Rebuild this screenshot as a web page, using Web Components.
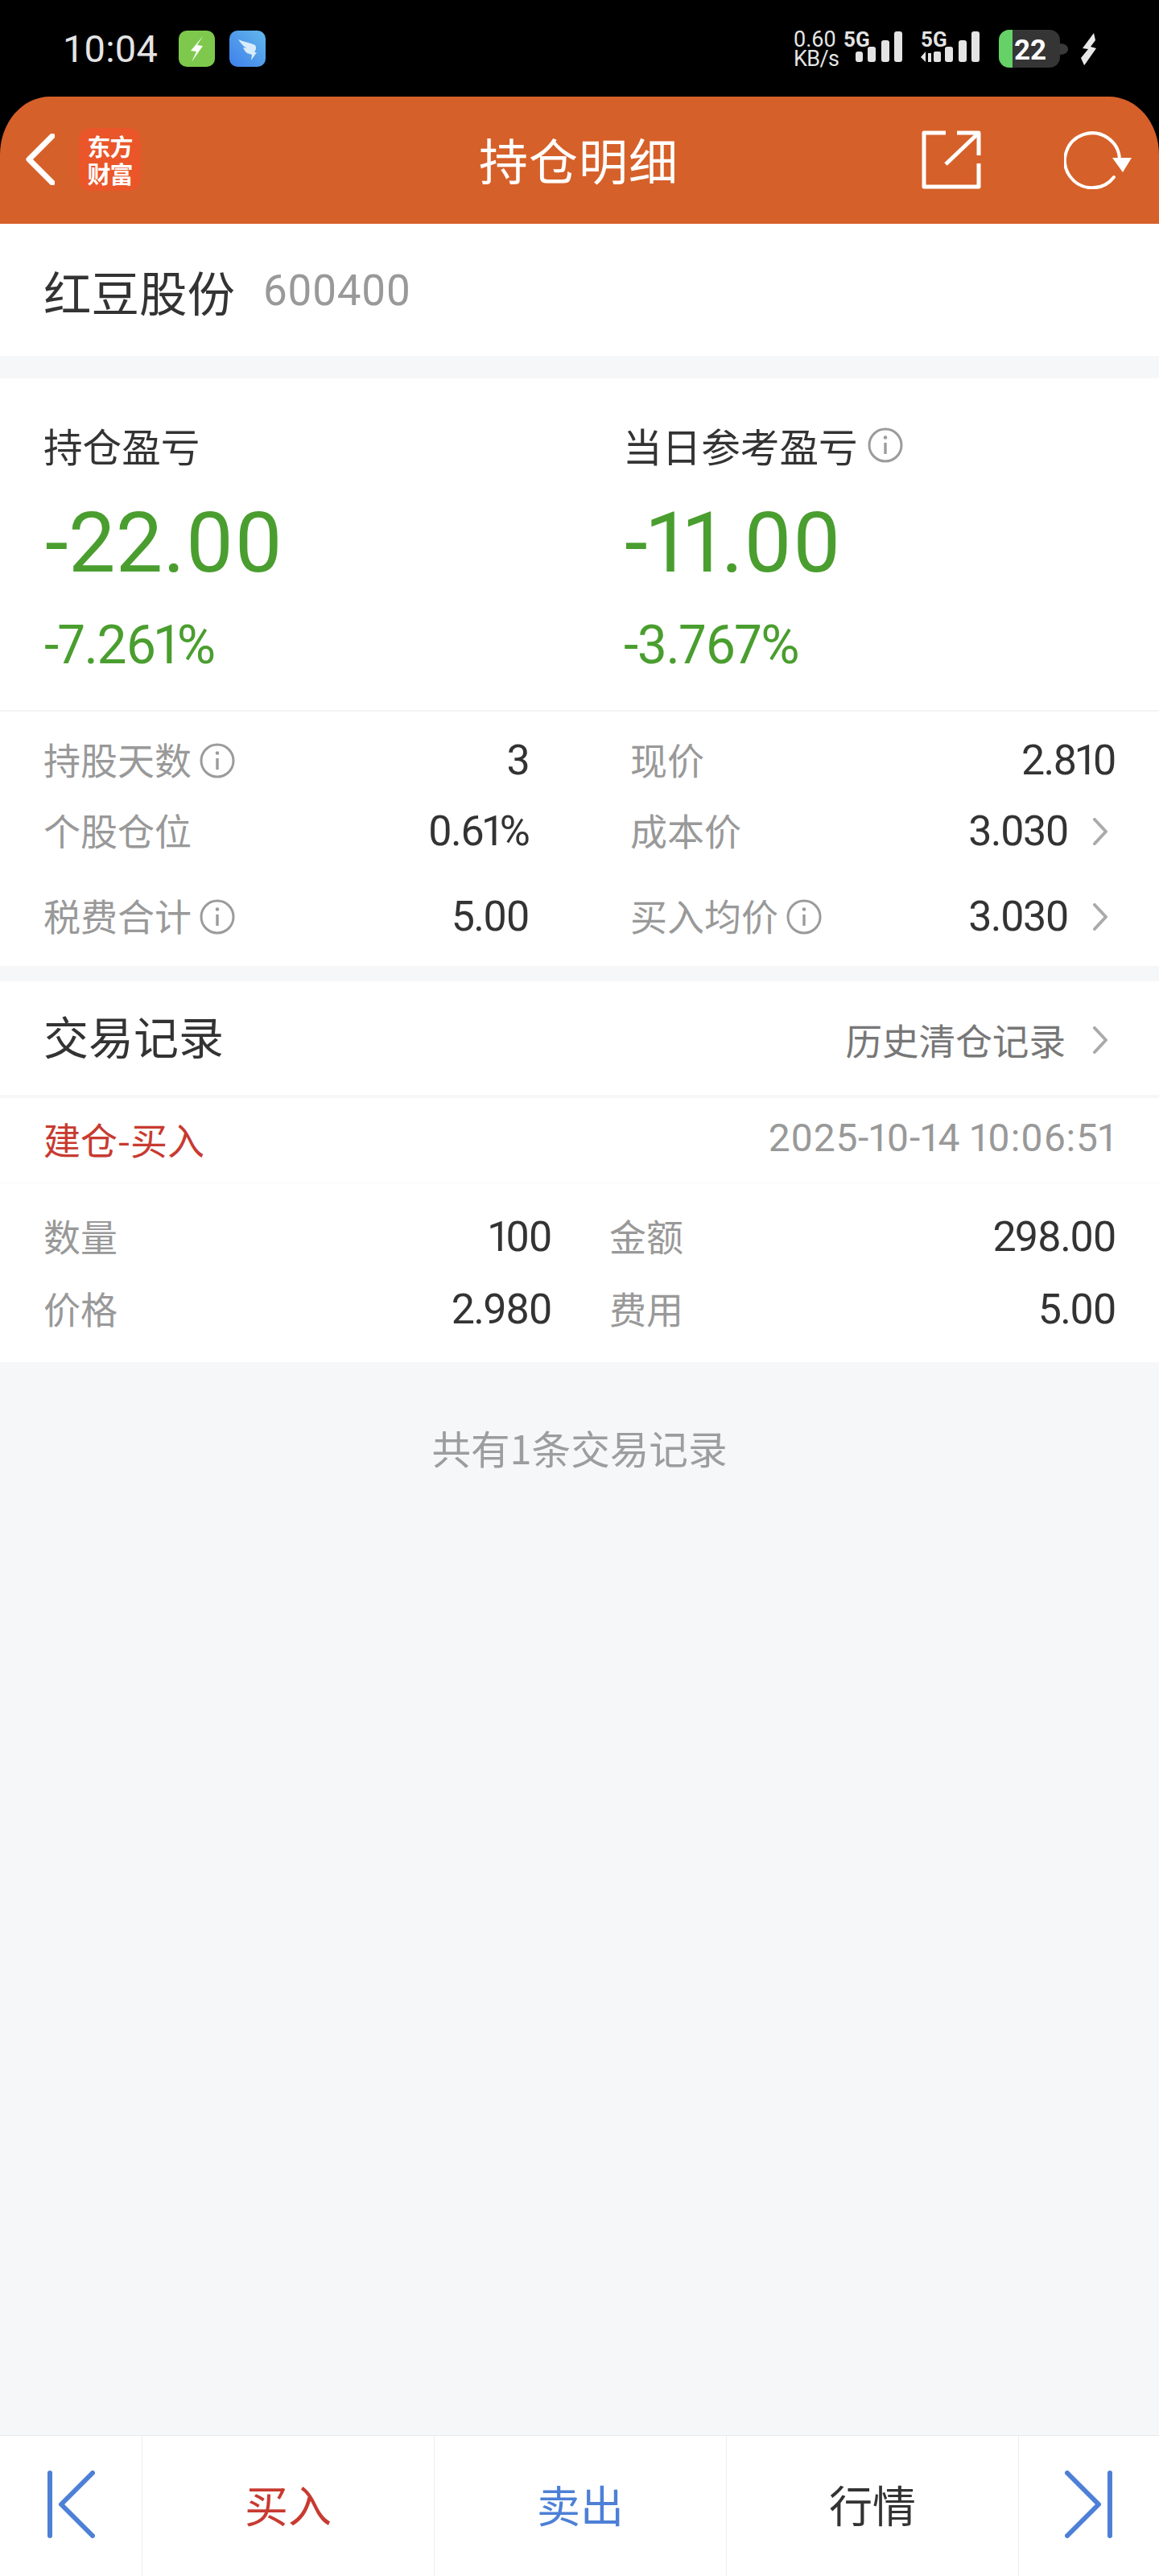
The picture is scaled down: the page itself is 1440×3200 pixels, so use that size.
<!DOCTYPE html>
<html lang="zh">
<head>
<meta charset="utf-8">
<title>持仓明细</title>
<style>
  html, body { margin: 0; padding: 0; }
  body {
    width: 1440px;
    height: 3200px;
    display: flex;
    flex-direction: column;
    overflow: hidden;
    background: #f6f7f9;
    color: #333;
    font-family: Roboto, "Noto Sans CJK SC", sans-serif;
  }
</style>
</head>
<body>
<status-bar></status-bar>
<app-header title="持仓明细"></app-header>
<stock-title name="红豆股份" code="600400"></stock-title>
<pnl-summary></pnl-summary>
<stat-grid>
  <stat-item label="持股天数" value="3" info></stat-item>
  <stat-item label="现价" value="2.810"></stat-item>
  <stat-item label="个股仓位" value="0.61%"></stat-item>
  <stat-item label="成本价" value="3.030" more></stat-item>
  <stat-item label="税费合计" value="5.00" info></stat-item>
  <stat-item label="买入均价" value="3.030" info more></stat-item>
</stat-grid>
<trade-section></trade-section>
<bottom-bar></bottom-bar>

<script>
const INFO_SVG = `<svg viewBox="0 0 44 44" width="44" height="44" fill="none" stroke="#9b9b9b">
  <circle cx="22" cy="22" r="20" stroke-width="3"/>
  <path d="M22 19v14" stroke-width="3.4"/>
  <circle cx="22" cy="12.5" r="2.3" fill="#9b9b9b" stroke="none"/>
</svg>`;

const CHEVRON_SVG = `<svg viewBox="0 0 20 34" width="20" height="34" fill="none" stroke="#aaa" stroke-width="4" stroke-linecap="round" stroke-linejoin="round">
  <path d="M3 2l14 15L3 32"/>
</svg>`;

class StatusBar extends HTMLElement {
  constructor() {
    super();
    this.attachShadow({ mode: 'open' });
  }

  connectedCallback() {
    this.shadowRoot.innerHTML = `
      <style>
        :host {
          display: flex;
          align-items: center;
          box-sizing: border-box;
          height: 120px;
          flex: none;
          padding: 4px 76px 3px 78px;
          background: #000;
          color: #e4e4e4;
          font-family: Roboto, sans-serif;
        }
        .time { font-size: 47px; line-height: 56px; margin-right: 26px; letter-spacing: .2px; }
        .app { display: block; width: 45px; height: 45px; margin-right: 18px; }
        .space { flex: 1; }
        .speed { width: 62px; font-size: 27px; line-height: 24px; }
        .speed div:last-child { letter-spacing: -.6px; }
        .signal { position: relative; width: 74px; height: 46px; }
        .signal svg { display: block; }
        .g5 { position: absolute; top: -4px; left: 0; font: 700 26px/30px Roboto, sans-serif; }
        .batt { display: block; margin-left: 24px; }
        .bolt { display: block; margin-left: 15px; }
      </style>
      <span class="time">10:04</span>
      <svg class="app" viewBox="0 0 45 45">
        <rect width="45" height="45" rx="10" fill="#7ec94d"/>
        <path d="M30 7L15 25l7 1-6 13 14-20-7-1z" fill="#fff"/>
      </svg>
      <svg class="app" viewBox="0 0 45 45">
        <defs><linearGradient id="dt" x1="0" y1="1" x2="1" y2="0">
          <stop offset="0" stop-color="#3f7fec"/><stop offset="1" stop-color="#62b8ea"/>
        </linearGradient></defs>
        <rect width="45" height="45" rx="10" fill="url(#dt)"/>
        <path d="M11 11c7 3 14 4 21 7 2 3 1 6-1 9l3 0-7 10 1-7-6-2c-3-2-4-5-5-7l5 1c-4-2-7-5-11-11z" fill="#d9ecfb"/>
      </svg>
      <span class="space"></span>
      <div class="speed"><div>0.60</div><div>KB/s</div></div>
      <div class="signal">
        <svg viewBox="0 0 74 46" width="74" height="46" fill="#e4e4e4">
          <rect x="15" y="26" width="9" height="13" rx="3"/>
          <rect x="30" y="20" width="10" height="19" rx="3"/>
          <rect x="47" y="12" width="10" height="27" rx="3"/>
          <rect x="63" y="1" width="10" height="38" rx="3"/>
        </svg>
        <span class="g5">5G</span>
      </div>
      <span style="width:21px"></span>
      <div class="signal">
        <svg viewBox="0 0 74 46" width="74" height="46" fill="#e4e4e4">
          <path d="M7 26v13l-6-6z"/>
          <rect x="10" y="28" width="4" height="11"/>
          <rect x="17" y="26" width="9" height="13" rx="2"/>
          <rect x="31" y="20" width="10" height="19" rx="3"/>
          <rect x="48" y="12" width="10" height="27" rx="3"/>
          <rect x="64" y="1" width="10" height="38" rx="3"/>
        </svg>
        <span class="g5" style="left:1px">5G</span>
      </div>
      <svg class="batt" viewBox="0 0 87 47" width="87" height="47">
        <path d="M76 17c6 0 10 3 10 7s-4 7-10 7z" fill="#3a3a3a"/>
        <rect width="76" height="47" rx="13" fill="#353535"/>
        <path d="M13 0h4v47h-4a13 13 0 0 1-13-13V13A13 13 0 0 1 13 0z" fill="#65d166"/>
        <text x="19" y="37" font-family="Roboto, sans-serif" font-weight="700" font-size="35" fill="#fff">22</text>
      </svg>
      <svg class="bolt" viewBox="0 0 21 40" width="21" height="40">
        <path d="M16 0L2 19l7 1-9 11 4 9 1-1 14-20-7-2 6-8z" fill="#e8e8e8"/>
      </svg>
    `;
  }
}

class AppHeader extends HTMLElement {
  constructor() {
    super();
    this.attachShadow({ mode: 'open' });
  }

  connectedCallback() {
    this.shadowRoot.innerHTML = `
      <style>
        :host {
          display: block;
          flex: none;
          background: #000;
        }
        .bar {
          display: grid;
          grid-template-columns: 1fr auto 1fr;
          align-items: center;
          box-sizing: border-box;
          height: 158px;
          padding: 0 34px 2px 32px;
          background: #d66029;
          color: #fff;
          border-radius: 62px 62px 0 0 / 72px 72px 0 0;
        }
        .left, .right { display: flex; align-items: center; }
        .right { justify-content: flex-end; gap: 103px; }
        .logo {
          box-sizing: border-box;
          width: 77px;
          height: 78px;
          margin-left: 30px;
          padding-top: 5px;
          border-radius: 16px;
          background: #ea5629;
          font: 700 29px/34px "Noto Sans CJK SC", sans-serif;
          text-align: center;
          letter-spacing: -1px;
        }
        .title {
          font: 400 61px/78px "Noto Sans CJK SC", sans-serif;
          letter-spacing: 1px;
        }
        svg { display: block; }
      </style>
      <div class="bar">
        <div class="left">
          <svg width="36" height="64" viewBox="0 0 36 64" fill="none" stroke="#fff" stroke-width="7" stroke-linecap="round" stroke-linejoin="round"><path d="M33 3L4 32l29 29"/></svg>
          <div class="logo">东方<br>财富</div>
        </div>
        <div class="title">${this.getAttribute('title')}</div>
        <div class="right">
          <svg width="74" height="73" viewBox="0 0 74 73" fill="none" stroke="#fff" stroke-width="5" stroke-linejoin="round">
            <path d="M30 3H3v67h68V41"/>
            <path d="M30 42L70 4"/>
            <path d="M44 3h27v28"/>
          </svg>
          <svg width="84" height="73" viewBox="0 0 84 73" fill="none" stroke="#fff" stroke-width="4">
            <path d="M69 36A34 34 0 1 0 62 58" stroke-linecap="round"/>
            <path d="M60 34h24L73 52z" fill="#fff" stroke="none"/>
          </svg>
        </div>
      </div>
    `;
  }
}

class StockTitle extends HTMLElement {
  constructor() {
    super();
    this.attachShadow({ mode: 'open' });
  }

  connectedCallback() {
    this.shadowRoot.innerHTML = `
      <style>
        :host {
          display: flex;
          align-items: center;
          flex: none;
          box-sizing: border-box;
          height: 164px;
          padding: 2px 54px 0;
          margin-bottom: 28px;
          background: #fff;
        }
        .name { font: 400 59.5px/70px "Noto Sans CJK SC", sans-serif; color: #333; }
        .code { margin-left: 35px; font: 400 53px/70px Roboto, sans-serif; color: #999; letter-spacing: .8px; }
      </style>
      <span class="name">${this.getAttribute('name')}</span>
      <span class="code">${this.getAttribute('code')}</span>
    `;
  }
}

class PnlSummary extends HTMLElement {
  constructor() {
    super();
    this.attachShadow({ mode: 'open' });
  }

  connectedCallback() {
    this.shadowRoot.innerHTML = `
      <style>
        :host {
          display: grid;
          grid-template-columns: 720px 1fr;
          flex: none;
          box-sizing: border-box;
          height: 414px;
          padding: 54px 54px 0;
          background: #fff;
          border-bottom: 2px solid #f3f4f6;
        }
        .label {
          display: flex;
          align-items: center;
          gap: 12px;
          height: 58px;
          font: 400 48.6px/58px "Noto Sans CJK SC", sans-serif;
          color: #333;
        }
        .label svg { display: block; }
        .big {
          margin: 33px 0 0 2px;
          height: 120px;
          font: 400 104px/120px Roboto, sans-serif;
          font-variant-numeric: proportional-nums;
          color: #4a9e2f;
          letter-spacing: .3px;
        }
        .pct {
          margin: 29px 0 0 1px;
          height: 76px;
          font: 400 66px/76px Roboto, sans-serif;
          font-variant-numeric: proportional-nums;
          color: #4a9e2f;
          letter-spacing: -1.4px;
        }
      </style>
      <div class="col">
        <div class="label">持仓盈亏</div>
        <div class="big">-22.00</div>
        <div class="pct">-7.261%</div>
      </div>
      <div class="col">
        <div class="label">当日参考盈亏 ${INFO_SVG}</div>
        <div class="big">-11.00</div>
        <div class="pct">-3.767%</div>
      </div>
    `;
  }
}

class StatGrid extends HTMLElement {
  constructor() {
    super();
    this.attachShadow({ mode: 'open' });
  }

  connectedCallback() {
    this.shadowRoot.innerHTML = `
      <style>
        :host {
          display: grid;
          grid-template-columns: 603px 603px;
          grid-template-rows: 88px 106px 88px;
          column-gap: 126px;
          align-items: start;
          flex: none;
          box-sizing: border-box;
          height: 316px;
          padding: 17px 54px 0;
          margin-bottom: 19px;
          background: #fff;
        }
      </style>
      <slot></slot>
    `;
  }
}

class StatItem extends HTMLElement {
  constructor() {
    super();
    this.attachShadow({ mode: 'open' });
  }

  connectedCallback() {
    const hasMore = this.hasAttribute('more');
    this.shadowRoot.innerHTML = `
      <style>
        :host {
          display: flex;
          align-items: center;
          height: 88px;
        }
        .label {
          display: flex;
          align-items: center;
          gap: 10px;
          padding-bottom: 6px;
          font: 400 46px/60px "Noto Sans CJK SC", sans-serif;
          color: #999;
        }
        .label svg { margin-top: 6px; }
        .value {
          margin-left: auto;
          font: 400 52px/60px Roboto, sans-serif;
          font-variant-numeric: proportional-nums;
          color: #333;
          letter-spacing: -1.8px;
        }
        .more { display: block; margin: 0 9px 0 30px; }
        svg { display: block; }
      </style>
      <span class="label">${this.getAttribute('label')}${this.hasAttribute('info') ? INFO_SVG : ''}</span>
      <span class="value">${this.getAttribute('value')}</span>
      ${hasMore ? `<span class="more">${CHEVRON_SVG}</span>` : ''}
    `;
  }
}

class TradeRecord extends HTMLElement {
  constructor() {
    super();
    this.attachShadow({ mode: 'open' });
  }

  connectedCallback() {
    this.shadowRoot.innerHTML = `
      <style>
        :host {
          display: block;
          box-sizing: border-box;
          height: 328px;
          background: #fff;
        }
        .top {
          display: flex;
          justify-content: space-between;
          align-items: center;
          box-sizing: border-box;
          height: 106px;
          padding: 0 54px 5px;
          border-bottom: 1px solid #f7f7f8;
        }
        .type { font: 400 46px/68px "Noto Sans CJK SC", sans-serif; color: #c83a30; }
        .time {
          font: 400 48px/68px Roboto, sans-serif;
          font-variant-numeric: proportional-nums;
          color: #999;
          letter-spacing: .65px;
        }
        .grid {
          display: grid;
          grid-template-columns: 631px 1fr;
          column-gap: 72px;
          margin-top: 22px;
          padding: 0 54px;
        }
        .cell { display: flex; justify-content: space-between; align-items: center; height: 90px; }
        .k { padding-bottom: 6px; font: 400 46px/60px "Noto Sans CJK SC", sans-serif; color: #999; }
        .v {
          font: 400 52px/60px Roboto, sans-serif;
          font-variant-numeric: proportional-nums;
          color: #333;
          letter-spacing: -1.8px;
        }
      </style>
      <div class="top">
        <span class="type">建仓-买入</span>
        <span class="time">2025-10-14 10:06:51</span>
      </div>
      <div class="grid">
        <div class="cell"><span class="k">数量</span><span class="v">100</span></div>
        <div class="cell"><span class="k">金额</span><span class="v">298.00</span></div>
        <div class="cell"><span class="k">价格</span><span class="v">2.980</span></div>
        <div class="cell"><span class="k">费用</span><span class="v">5.00</span></div>
      </div>
    `;
  }
}

class TradeSection extends HTMLElement {
  constructor() {
    super();
    this.attachShadow({ mode: 'open' });
  }

  connectedCallback() {
    this.shadowRoot.innerHTML = `
      <style>
        :host { display: block; flex: none; }
        .head {
          display: flex;
          align-items: center;
          box-sizing: border-box;
          height: 145px;
          padding: 0 63px 0 54px;
          background: #fff;
          border-bottom: 4px solid #f6f7f9;
        }
        .title { font: 400 56px/70px "Noto Sans CJK SC", sans-serif; color: #333; margin-bottom: 8px; }
        .link {
          margin-left: auto;
          display: flex;
          align-items: center;
          gap: 33px;
          font: 400 45.6px/60px "Noto Sans CJK SC", sans-serif;
          color: #777;
          margin-top: 2px;
        }
        .link svg { display: block; margin-top: 2px; }
        .count {
          margin-top: 76px;
          text-align: center;
          font: 400 48.6px/60px "Noto Sans CJK SC", sans-serif;
          color: #9d9d9d;
        }
      </style>
      <div class="head">
        <span class="title">交易记录</span>
        <span class="link">历史清仓记录 ${CHEVRON_SVG}</span>
      </div>
      <trade-record></trade-record>
      <div class="count">共有1条交易记录</div>
    `;
  }
}

class BottomBar extends HTMLElement {
  constructor() {
    super();
    this.attachShadow({ mode: 'open' });
  }

  connectedCallback() {
    this.shadowRoot.innerHTML = `
      <style>
        :host {
          display: grid;
          grid-template-columns: 176px 363px 363px 363px 1fr;
          flex: none;
          box-sizing: border-box;
          height: 175px;
          margin-top: auto;
          background: #fff;
          border-top: 1px solid #e8e9eb;
        }
        .cell {
          display: flex;
          align-items: center;
          justify-content: center;
          box-sizing: border-box;
          padding-bottom: 4px;
          border-left: 1px solid #eeeeee;
          font: 400 54px/70px "Noto Sans CJK SC", sans-serif;
        }
        .cell:first-of-type { border-left: 0; }
        .buy { color: #c83a30; }
        .sell { color: #4d80d6; }
        .quote { color: #333; }
        svg { display: block; }
      </style>
      <div class="cell">
        <svg width="60" height="84" viewBox="0 0 60 84" fill="none" stroke="#4d80d6" stroke-width="6" stroke-linecap="round" stroke-linejoin="round">
          <path d="M4 3v78"/><path d="M57 3L18 42l39 39"/>
        </svg>
      </div>
      <div class="cell buy">买入</div>
      <div class="cell sell">卖出</div>
      <div class="cell quote">行情</div>
      <div class="cell">
        <svg width="60" height="84" viewBox="0 0 60 84" fill="none" stroke="#4d80d6" stroke-width="6" stroke-linecap="round" stroke-linejoin="round">
          <path d="M56 3v78"/><path d="M3 3l39 39L3 81"/>
        </svg>
      </div>
    `;
  }
}

customElements.define('status-bar', StatusBar);
customElements.define('app-header', AppHeader);
customElements.define('stock-title', StockTitle);
customElements.define('pnl-summary', PnlSummary);
customElements.define('stat-grid', StatGrid);
customElements.define('stat-item', StatItem);
customElements.define('trade-record', TradeRecord);
customElements.define('trade-section', TradeSection);
customElements.define('bottom-bar', BottomBar);
</script>
</body>
</html>
